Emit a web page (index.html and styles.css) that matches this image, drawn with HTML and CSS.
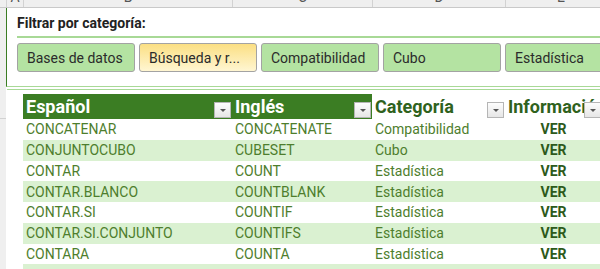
FILE: index.html
```html
<!DOCTYPE html>
<html lang="es">
  <head>
    <meta charset="UTF-8" />
    <meta name="viewport" content="width=device-width, initial-scale=1.0" />
    <title>Funciones de Excel por categoría</title>
    <link rel="stylesheet" href="styles.css">
  </head>
  <body>
    <div class="colbar">
      <div class="corner"></div>
      <div class="colhead col-a"><span>A</span></div>
      <div class="colhead col-b"><span>B</span></div>
      <div class="colhead col-c"><span>C</span></div>
      <div class="colhead col-d"><span>D</span></div>
      <div class="colhead col-e"><span>E</span></div>
    </div>

    <div class="body">
      <div class="rowbar">
        <div class="rowline"></div>
      </div>

      <div class="sheet">
        <!-- Segmentación de datos -->
        <section class="slicer">
          <div class="slicer-title">Filtrar por categoría:</div>
          <div class="slicer-items">
            <button type="button" class="item">Bases de datos</button>
            <button type="button" class="item active">Búsqueda y r...</button>
            <button type="button" class="item">Compatibilidad</button>
            <button type="button" class="item">Cubo</button>
            <button type="button" class="item">Estadística</button>
          </div>
        </section>
        <div class="slicer-edge"></div>

        <table class="funcs">
          <colgroup>
            <col class="w-es" />
            <col class="w-en" />
            <col class="w-cat" />
            <col class="w-info" />
          </colgroup>
          <thead>
            <tr>
              <th class="dark">Español<span class="filter"></span></th>
              <th class="dark">Inglés<span class="filter"></span></th>
              <th>Categoría<span class="filter"></span></th>
              <th>Información<span class="filter"></span></th>
            </tr>
          </thead>
          <tbody>
            <tr>
              <td>CONCATENAR</td><td>CONCATENATE</td><td>Compatibilidad</td><td class="ver">VER</td>
            </tr>
            <tr>
              <td>CONJUNTOCUBO</td><td>CUBESET</td><td>Cubo</td><td class="ver">VER</td>
            </tr>
            <tr>
              <td>CONTAR</td><td>COUNT</td><td>Estadística</td><td class="ver">VER</td>
            </tr>
            <tr>
              <td>CONTAR.BLANCO</td><td>COUNTBLANK</td><td>Estadística</td><td class="ver">VER</td>
            </tr>
            <tr>
              <td>CONTAR.SI</td><td>COUNTIF</td><td>Estadística</td><td class="ver">VER</td>
            </tr>
            <tr>
              <td>CONTAR.SI.CONJUNTO</td><td>COUNTIFS</td><td>Estadística</td><td class="ver">VER</td>
            </tr>
            <tr>
              <td>CONTARA</td><td>COUNTA</td><td>Estadística</td><td class="ver">VER</td>
            </tr>
            <tr>
              <td>CONTAR.SI</td><td>COUNTIF</td><td>Estadística</td><td class="ver">VER</td>
            </tr>
          </tbody>
        </table>
      </div>
    </div>
  </body>
</html>
```

FILE: styles.css
```css
body {
  margin: 0;
  width: 600px;
  height: 269px;
  overflow: hidden;
  background-color: #fff;
  font-family: Roboto, "Noto Sans", sans-serif;
}

/* column letters strip */
.colbar {
  display: flex;
  height: 7px;
  background-color: #efefef;
  border-bottom: 1px solid #c9c9c9;
  overflow: hidden;
}

.corner {
  width: 6px;
  flex-shrink: 0;
}

.colhead {
  flex-shrink: 0;
  border-left: 1px solid #d2d2d2;
  text-align: center;
  color: #555;
  font-size: 14px;
  line-height: 14px;
  overflow: hidden;
}

.colhead span {
  display: block;
  margin-top: -10px;
}

.col-a { width: 16px; }
.col-b { width: 208px; }
.col-c { width: 139px; }
.col-d { width: 132px; }
.col-e { width: 110px; }

.body {
  display: flex;
  height: 261px;
}

.rowbar {
  width: 6px;
  flex-shrink: 0;
  background-color: #efefef;
}

.rowline {
  height: 110px;
  border-bottom: 1px solid #d2d2d2;
}

.sheet {
  flex: 1;
  min-width: 0;
  overflow: hidden;
}

/* slicer */
.slicer {
  height: 78px;
  border-left: 1px solid #3b7d23;
  border-bottom: 1px solid #a8d996;
  padding-left: 10px;
}

.slicer-title {
  height: 27px;
  padding-top: 1px;
  line-height: 28px;
  font-size: 14px;
  font-weight: bold;
  color: #222;
  border-bottom: 2px solid #a8d996;
}

.slicer-items {
  display: flex;
  gap: 4px;
  margin-top: 5px;
}

.item {
  flex-shrink: 0;
  width: 118px;
  height: 29px;
  padding: 0 0 0 9px;
  text-align: left;
  font-family: Roboto, "Noto Sans", sans-serif;
  font-size: 14px;
  color: #2b2b2b;
  background-color: #b4e3a2;
  border: 1px solid #a3a3a3;
  border-radius: 3px;
}

.item.active {
  background: linear-gradient(#fbdf83, #fff6d2);
}

.slicer-edge {
  height: 1px;
  margin-top: 2px;
  margin-left: 1px;
  background-color: #a8d996;
}

/* functions table */
.funcs {
  margin: 4px 0 0 17px;
  border-collapse: collapse;
  table-layout: fixed;
  width: 579px;
}

.w-es { width: 209px; }
.w-en { width: 140px; }
.w-cat { width: 133px; }
.w-info { width: 97px; }

.funcs th {
  position: relative;
  height: 25px;
  padding: 0 0 0 3px;
  text-align: left;
  font-size: 18px;
  font-weight: bold;
  color: #2f621d;
  white-space: nowrap;
  overflow: hidden;
}

.funcs th.dark {
  background-color: #3b7d23;
  color: #fff;
}

.filter {
  position: absolute;
  right: 1px;
  bottom: 1px;
  width: 15px;
  height: 14px;
  background: linear-gradient(#fdfdfd, #e6e6e6);
  border: 1px solid #b5b5b5;
}

.filter::after {
  content: "";
  position: absolute;
  left: 5px;
  top: 6px;
  border-left: 3px solid transparent;
  border-right: 3px solid transparent;
  border-top: 3px solid #555;
}

.funcs td {
  height: 20.75px;
  padding: 0 0 0 3px;
  font-size: 14px;
  color: #4e7e2d;
  white-space: nowrap;
  overflow: hidden;
}

.funcs tbody tr:nth-child(even) td {
  background-color: #daf1d1;
}

.funcs td.ver {
  padding: 0;
  text-align: center;
  font-weight: bold;
  color: #2d5a1b;
}
```
